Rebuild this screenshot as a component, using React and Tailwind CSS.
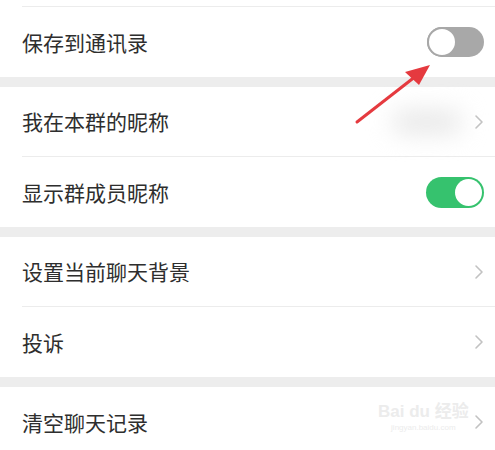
import React from 'react'

const font = { fontFamily: '"Noto Sans CJK SC", "Noto Sans", sans-serif' }

function Chevron() {
  return (
    <svg width="10" height="16" viewBox="0 0 10 16" className="shrink-0">
      <path d="M2 2 L8 8 L2 14" fill="none" stroke="#c2c2c2" strokeWidth="1.6" strokeLinecap="round" strokeLinejoin="round" />
    </svg>
  )
}

function Toggle({ on }) {
  if (on) {
    return (
      <div className="flex h-[31px] w-[58px] items-center justify-end rounded-full bg-[#36c26e] p-[2px]">
        <div className="h-[27px] w-[27px] rounded-full bg-white" />
      </div>
    )
  }
  return (
    <div className="flex h-[30px] w-[57px] items-center rounded-full bg-[#a8a8a8]">
      <div className="h-[30px] w-[30px] rounded-full border-2 border-[#a8a8a8] bg-white" />
    </div>
  )
}

function Row({ label, children, divider }) {
  return (
    <div className="pl-[22px]">
      <div className={`flex h-[70px] items-center pr-[11px] ${divider ? 'border-b border-[#ececec]' : ''}`}>
        <span className="flex-1 text-[21px] leading-none text-[#2e2e2e]">{label}</span>
        {children}
      </div>
    </div>
  )
}

function Band() {
  return <div className="h-[10px] bg-[#ededed]" />
}

export default function App() {
  return (
    <div className="relative h-[450px] w-[495px] overflow-hidden bg-white" style={font}>
      <div className="pl-[22px]">
        <div className="h-[7px] border-b border-[#ececec]" />
      </div>
      <Row label="保存到通讯录">
        <Toggle on={false} />
      </Row>
      <Band />
      <Row label="我在本群的昵称" divider>
        <div className="mr-[12px] h-[22px] w-[70px] rounded-full bg-[#e6e6e6] blur-md" />
        <Chevron />
      </Row>
      <Row label="显示群成员昵称">
        <Toggle on />
      </Row>
      <Band />
      <Row label="设置当前聊天背景" divider>
        <Chevron />
      </Row>
      <Row label="投诉">
        <Chevron />
      </Row>
      <Band />
      <Row label="清空聊天记录">
        <Chevron />
      </Row>

      {/* annotation arrow */}
      <svg className="pointer-events-none absolute left-0 top-0" width="495" height="450">
        <line x1="357" y1="122" x2="416" y2="76" stroke="#e53a3f" strokeWidth="3" strokeLinecap="round" />
        <polygon points="430,65 405,72 419,85" fill="#e53a3f" />
      </svg>

      {/* watermark */}
      <div className="pointer-events-none absolute left-[378px] top-[403px] flex flex-col items-center text-[#ececec]" style={{ fontFamily: '"Liberation Sans", "Noto Sans CJK SC", sans-serif' }}>
        <div className="text-[17px] font-bold leading-none">Bai du 经验</div>
        <div className="mt-[4px] text-[8px] leading-none">jingyan.baidu.com</div>
      </div>
    </div>
  )
}
